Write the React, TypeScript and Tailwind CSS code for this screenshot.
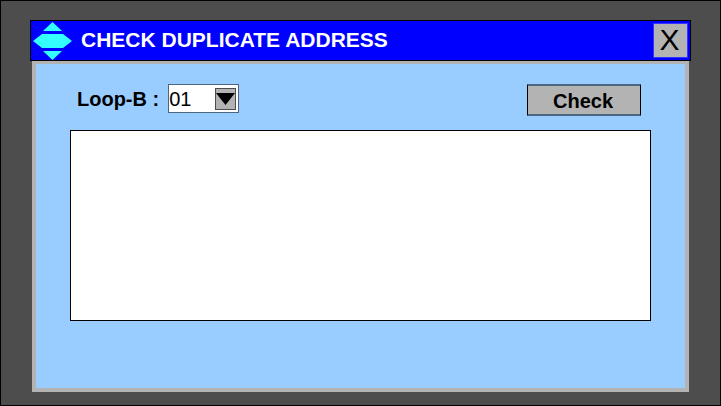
export default function App() {
  return (
    <div className="w-[721px] h-[406px] bg-[#4d4d4d] border border-black pt-[19px] px-[29px] font-['Liberation_Sans',sans-serif] text-black overflow-hidden">
      {/* Title bar */}
      <div className="h-[41px] bg-[#0000ff] border border-black flex items-center pl-[2px] pr-[2px]">
        <svg width="40" height="38" viewBox="0 0 40 38" className="shrink-0">
          <path d="M19.5 0 L29 9 L10 9 Z" fill="#33ffff" />
          <path d="M0 19 L9 12 L30 12 L39 19 L30 26 L9 26 Z" fill="#33ffff" />
          <path d="M10 29 L29 29 L19.5 38 Z" fill="#33ffff" />
        </svg>
        <span className="ml-[8px] mb-[2px] text-white font-bold text-[21px] leading-none">CHECK DUPLICATE ADDRESS</span>
        <button className="ml-auto w-[35px] h-[35px] bg-[#b3b3b3] border border-[#3333ff] flex items-center justify-center pb-[2px] pr-[2px] text-[30px] leading-none">
          X
        </button>
      </div>

      {/* Body */}
      <div className="mx-[2px] h-[331px] bg-[#99ccff] border-x-[4px] border-b-[4px] border-t-[3px] border-[#b3b3b3] pt-[20px] px-[34px]">
        <div className="h-[46px] flex items-start">
          <span className="ml-[7px] mt-[3px] font-bold text-[20px] leading-[24px]">Loop-B :</span>
          <div className="ml-[9px] w-[71px] h-[29px] bg-white border border-[#4d6680] flex items-center justify-between pr-[2px]">
            <span className="mt-[1px] text-[20px] leading-none">01</span>
            <div className="w-[21px] h-[22px] bg-[#b3b3b3] border border-[#4d4d4d] flex justify-center pt-[4px]">
              <svg width="19" height="12" viewBox="0 0 19 12">
                <path d="M0 0 H19 L9.5 12 Z" fill="#000" />
              </svg>
            </div>
          </div>
          <button className="ml-auto mr-[10px] w-[114px] h-[32px] bg-[#b3b3b3] border border-black border-t-2 border-t-[#4d6680] border-b-2 border-b-[#4d6680] pt-[2px] pr-[2px] font-bold text-[20px] leading-none">
            Check
          </button>
        </div>
        <div className="w-[581px] h-[191px] bg-white border border-black"></div>
      </div>
    </div>
  );
}
